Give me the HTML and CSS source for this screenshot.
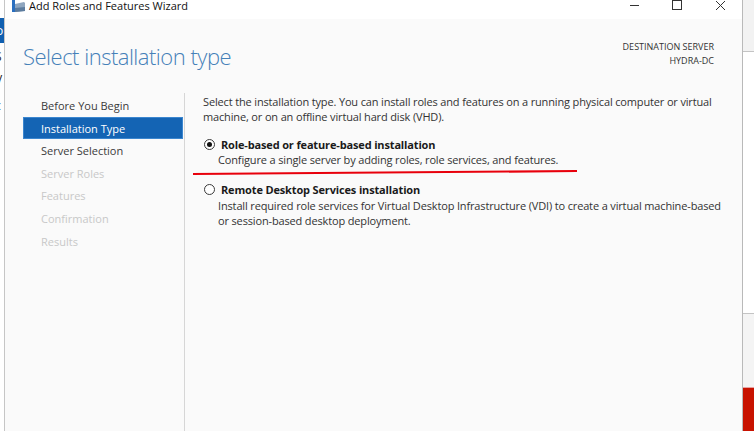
FILE: index.html
```html
<!DOCTYPE html>
<html>
<head>
<meta charset="utf-8">
<link rel="stylesheet" href="styles.css">
</head>
<body>
<div class="desktop">
  <div class="left-strip">
    <div class="ls-top"></div>
    <div class="ls-blue"><span>o</span></div>
    <div class="ls-letter l1">S</div>
    <div class="ls-letter l2">V</div>
    <div class="ls-letter l3">c</div>
  </div>
  <div class="window">
    <div class="titlebar">
      <svg class="app-icon" width="14" height="13" viewBox="0 0 14 13">
        <rect x="0" y="0" width="3" height="12" fill="#2a6fc0"/>
        <path d="M3 4 L12 2 L13 3 L13 11 L3 12 Z" fill="#8fa6bf"/>
        <path d="M3 8 L13 7 L13 11 L3 12 Z" fill="#5d7c9e"/>
      </svg>
      <span class="title">Add Roles and Features Wizard</span>
      <svg class="controls" width="120" height="12" viewBox="0 0 120 12">
        <line x1="8" y1="5.5" x2="17" y2="5.5" stroke="#333" stroke-width="1"/>
        <rect x="50.5" y="0.5" width="9" height="9" fill="none" stroke="#333" stroke-width="1"/>
        <path d="M94 1 L103 10 M103 1 L94 10" stroke="#333" stroke-width="1" fill="none"/>
      </svg>
    </div>
    <div class="content">
      <div class="header">
        <h1 class="heading">Select installation type</h1>
        <div class="dest">
          <div>DESTINATION SERVER</div>
          <div>HYDRA-DC</div>
        </div>
      </div>
      <div class="main">
        <ul class="nav">
          <li class="nav-item">Before You Begin</li>
          <li class="nav-item active">Installation Type</li>
          <li class="nav-item">Server Selection</li>
          <li class="nav-item disabled">Server Roles</li>
          <li class="nav-item disabled">Features</li>
          <li class="nav-item disabled">Confirmation</li>
          <li class="nav-item disabled">Results</li>
        </ul>
        <div class="divider"></div>
        <div class="pane">
          <p class="intro">Select the installation type. You can install roles and features on a running physical computer or virtual machine, or on an offline virtual hard disk (VHD).</p>
          <div class="option">
            <div class="opt-label"><span class="radio checked"></span><span class="label-text">Role-based or feature-based installation</span></div>
            <p class="opt-desc">Configure a single server by adding roles, role services, and features.</p>
          </div>
          <div class="option second">
            <div class="opt-label"><span class="radio"></span><span class="label-text">Remote Desktop Services installation</span></div>
            <p class="opt-desc">Install required role services for Virtual Desktop Infrastructure (VDI) to create a virtual machine-based or session-based desktop deployment.</p>
          </div>
        </div>
      </div>
    </div>
  </div>
  <div class="right-strip">
    <div class="rs rs1"></div>
    <div class="rs rs2"></div>
    <div class="rs rs3"></div>
    <div class="rs rs4"></div>
  </div>
  <svg class="annotation" width="754" height="431" viewBox="0 0 754 431">
    <line x1="193" y1="174" x2="577" y2="171" stroke="#e8000c" stroke-width="2.2"/>
  </svg>
</div>
</body>
</html>
```
FILE: styles.css
```css
* { box-sizing: border-box; }
html, body { margin: 0; padding: 0; }
body {
  width: 754px;
  height: 431px;
  overflow: hidden;
  background: #ffffff;
  font-family: "Open Sans", "Noto Sans", sans-serif;
  color: #333;
}
.desktop {
  position: relative;
  display: flex;
  width: 754px;
  height: 431px;
}
.left-strip {
  width: 4px;
  flex: none;
  overflow: hidden;
  background: #ffffff;
  display: flex;
  flex-direction: column;
}
.ls-top { height: 18px; }
.ls-blue {
  height: 25px;
  background: #0f5fb0;
  color: #fff;
  font-size: 12px;
  line-height: 25px;
  margin-left: -4px;
}
.ls-letter {
  font-size: 12px;
  line-height: 14px;
  color: #222;
  margin-left: -5px;
}
.l1 { margin-top: 7px; }
.l2 { margin-top: 9px; }
.l3 { margin-top: 12px; }

.window {
  flex: 1;
  display: flex;
  flex-direction: column;
  border-left: 1px solid #c6c6c6;
  border-right: 1px solid #b9b9b9;
  background: #fafafa;
}
.titlebar {
  height: 19px;
  background: #ffffff;
  display: flex;
  align-items: flex-start;
  flex: none;
}
.app-icon { margin-left: 7px; flex: none; }
.title {
  margin-left: 3px;
  margin-top: -2px;
  font-size: 11px;
  line-height: 15px;
  color: #111;
}
.controls {
  margin-left: auto;
  display: block;
  flex: none;
}

.content {
  flex: 1;
  display: flex;
  flex-direction: column;
}
.header {
  display: flex;
  justify-content: space-between;
  align-items: flex-start;
  height: 74px;
  flex: none;
}
.heading {
  margin: 22px 0 0 18px;
  font-size: 22px;
  font-weight: 300;
  letter-spacing: -0.5px;
  line-height: 30px;
  color: #4580b8;
}
.dest {
  margin: 21px 28px 0 0;
  text-align: right;
  font-size: 9px;
  line-height: 13.5px;
  color: #333;
}
.main {
  flex: 1;
  display: flex;
}
.nav {
  list-style: none;
  margin: 1px 0 0 18px;
  padding: 0;
  width: 160px;
  flex: none;
}
.nav-item {
  height: 22.6px;
  line-height: 22px;
  padding-left: 17px;
  font-size: 11px;
  color: #3a3a3a;
  border: 1px solid transparent;
}
.nav-item.active {
  background: #1464b4;
  border-color: #3b86cf;
  color: #ffffff;
}
.nav-item.disabled { color: #c8c8c8; }
.divider {
  width: 1px;
  background: #d6d6d6;
  margin-left: 1px;
  flex: none;
}
.pane {
  flex: 1;
  padding: 1px 18px 0 18px;
  font-size: 11px;
  letter-spacing: -0.15px;
  color: #333;
}
.intro {
  margin: 0;
  line-height: 15px;
}
.option { margin-top: 12px; }
.option.second { margin-top: 14px; }
.opt-label {
  display: flex;
  align-items: center;
  height: 16px;
}
.radio {
  width: 11px;
  height: 11px;
  border-radius: 50%;
  border: 1px solid #3a3a3a;
  background: #fff;
  margin-left: 1px;
  flex: none;
  position: relative;
}
.radio.checked::after {
  content: "";
  position: absolute;
  left: 2px;
  top: 2px;
  width: 5px;
  height: 5px;
  border-radius: 50%;
  background: #111;
}
.label-text {
  margin-left: 6px;
  font-weight: 700;
  color: #1a1a1a;
}
.opt-desc {
  margin: 0 0 0 15px;
  line-height: 15.5px;
}

.right-strip {
  width: 11px;
  flex: none;
  display: flex;
  flex-direction: column;
}
.rs1 { height: 52px; background: #f2f2f2; border-bottom: 1px solid #c4c4c4; }
.rs2 { height: 262px; background: #ffffff; border-bottom: 1px solid #c4c4c4; }
.rs3 { height: 74px; background: #f4f4f4; border-bottom: 1px solid #e8a0a0; }
.rs4 { flex: 1; background: #c81200; }
.annotation {
  position: absolute;
  left: 0;
  top: 0;
  pointer-events: none;
}
```
